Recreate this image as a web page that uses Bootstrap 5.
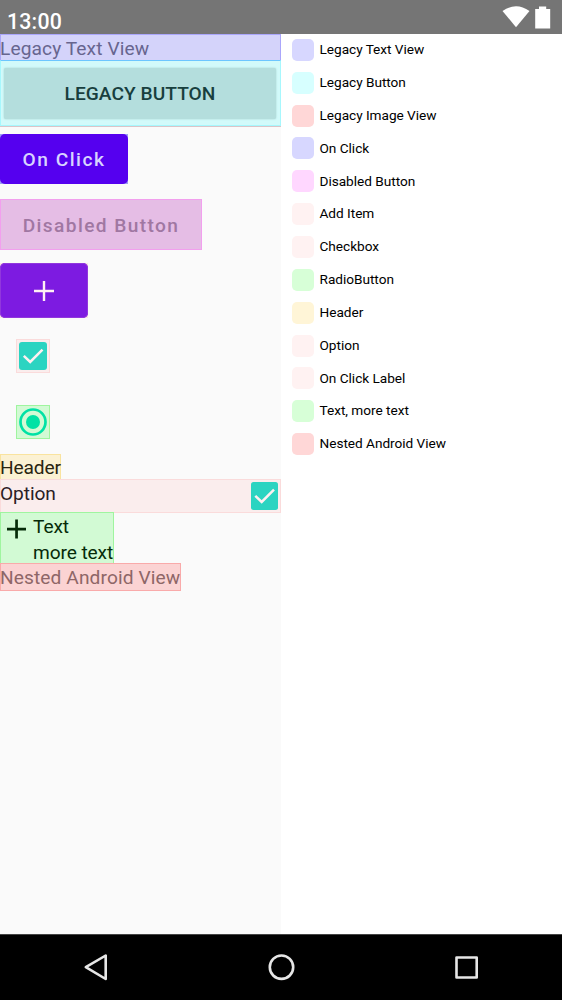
<!DOCTYPE html>
<html lang="en">
<head>
<meta charset="utf-8">
<meta name="viewport" content="width=device-width, initial-scale=1">
<title>Accessibility snapshot</title>
<link href="https://cdn.jsdelivr.net/npm/bootstrap@5.3.0/dist/css/bootstrap.min.css" rel="stylesheet">
<style>
body{font-family:Roboto,"Liberation Sans",sans-serif;background:#fff;color:#000}
.screen{height:1000px;width:562px;overflow:hidden}
.status{height:34px;background:#757575;color:#fff;font-size:21.3px;font-weight:500;line-height:24px;letter-spacing:.2px;padding:10px 10px 0 7px}
.status svg{margin-top:-10px}
.views{width:281px;background:#fafafa;font-size:19.15px;line-height:25.5px}
.zone{border:1px solid;white-space:nowrap}
.zone>span,.zone.flush{text-indent:-1px}
.z-blue{background:#d4d3fa;border-color:#aaa6fb;color:#67658f;height:27px;line-height:27px;letter-spacing:.1px}
.z-cyan{background:#d2fafa;border-color:#a7f7fd;border-top-color:#6cc6ff;height:66px;margin-top:-1px;padding:7px 4px 6px 3px}
.legacy-btn{height:51px;background:#b4dedd;border-radius:2px;box-shadow:0 0 2px #9fcccb;color:#183f3e;font-size:19.15px;font-weight:500;letter-spacing:.05px}
.image-line{height:1px;background:#d9c5c8}
.fill-btn{font-size:19.15px;font-weight:500;letter-spacing:1.5px;border-radius:5px;padding-top:2px}
.b-click{width:128px;height:50px;margin-top:7px;background:#9c9bf5}
.b-click .fill-btn{background:#5500ef;color:#d8d4ff}
.b-off{width:202px;height:51px;margin-top:15px;background:#e5bde5;border-color:#f29fee;color:#a077a2;letter-spacing:1.4px}
.b-add{width:88px;height:55px;margin-top:13px;background:#fae3e3}
.b-add .fill-btn{background:#7d1be1;box-shadow:inset 0 0 0 1px #9137dd;padding-top:0}
.box-tick{width:34px;height:34px;margin:21px 0 0 16px;background:#faeded;border-color:#fadbdb}
.box-radio{width:34px;height:34px;margin:32px 0 0 16px;background:#d2fad4;border-color:#9ff59f}
.z-head{width:61px;height:26px;margin-top:15px;background:#fbf1d3;border-color:#f9e39f;color:#292411;letter-spacing:-.15px}
.z-opt{height:34px;margin-top:-1px;background:#faeded;border-color:#fadbdb;color:#2a2025;letter-spacing:-.1px}
.z-opt span{padding-top:1px}
.z-green{width:114px;height:52px;margin-top:-1px;background:#d2fad4;border-color:#9ff59f;color:#052b08;letter-spacing:-.1px}
.z-green span{padding-top:1px;text-indent:0}
.z-red{width:181px;height:28px;margin-top:-1px;line-height:28px;background:#fbd3d3;border-color:#f9aaaa;color:#8e6667;letter-spacing:.1px}
.legend{padding:0 0 0 11px}
.entry{height:32.85px;font-size:13.65px;gap:5.5px;letter-spacing:-.03px}
.entry span{margin-top:-2px}
.swatch{width:22px;height:22px;border-radius:5px;margin-top:-1px}
.navkeys{height:66px;background:#000;border-top:1px solid #444}
svg{display:block;flex:none}
</style>
</head>
<body>
<div class="screen d-flex flex-column">
  <header class="status d-flex justify-content-between">
    <span>13:00</span>
    <svg width="52" height="32" viewBox="500 0 52 32" fill="#fff"><path d="M502.5 11Q516 1.5 529.5 11L516 27.2Z"/><path d="M535.2 8.9H539V6.5H546.2V8.9H550.2V28.5H535.2Z"/></svg>
  </header>
  <main class="d-flex flex-grow-1">
    <section class="views">
      <div class="zone flush z-blue">Legacy Text View</div>
      <div class="zone z-cyan"><div class="legacy-btn d-flex align-items-center justify-content-center">LEGACY BUTTON</div></div>
      <div class="image-line"></div>
      <div class="b-click"><div class="fill-btn h-100 d-flex align-items-center justify-content-center">On Click</div></div>
      <div class="zone fill-btn rounded-0 b-off d-flex align-items-center justify-content-center">Disabled Button</div>
      <div class="b-add"><div class="fill-btn h-100 d-flex align-items-center justify-content-center">
        <svg width="20" height="20" viewBox="0 0 20 20" fill="#fff0f3"><path d="M8.8 0h2.4v8.8H20v2.4h-8.8V20H8.8v-8.8H0V8.8h8.8z"/></svg></div></div>
      <div class="zone box-tick d-flex align-items-center justify-content-center">
        <svg width="28" height="28" viewBox="0 0 28 28"><rect width="28" height="28" rx="3" fill="#2bd4c1"/><path d="M4.8 13.8l6.4 6.2L23.5 7.7" fill="none" stroke="#fff0f1" stroke-width="2.5"/></svg>
      </div>
      <div class="zone box-radio d-flex align-items-center justify-content-center">
        <svg width="28" height="28" viewBox="0 0 28 28"><circle cx="14" cy="14" r="12.5" fill="none" stroke="#00e2a5" stroke-width="2.7"/><circle cx="14" cy="14" r="7" fill="#00e2a5"/></svg>
      </div>
      <div class="zone flush z-head">Header</div>
      <div class="zone z-opt d-flex justify-content-between"><span>Option</span>
        <svg width="29" height="30" viewBox="0 0 29 30"><rect x="0" y="2" width="27" height="28" rx="2.5" fill="#2bd4c1"/><path d="M4.3 15.8l6.4 6.2L23 9.7" fill="none" stroke="#fff0f1" stroke-width="2.5"/></svg>
      </div>
      <div class="zone z-green d-flex"><svg width="32" height="30" viewBox="0 0 32 30" fill="#052b08"><path d="M14.2 6.5h2.7v8.2H25v2.7h-8.1v8.2h-2.7v-8.2H6v-2.7h8.2z"/></svg>
        <span>Text<br>more text</span></div>
      <div class="zone flush z-red">Nested Android View</div>
    </section>
    <section class="legend flex-grow-1">
      <div class="entry d-flex align-items-center"><i class="swatch" style="background:#d7d7ff"></i><span>Legacy Text View</span></div>
      <div class="entry d-flex align-items-center"><i class="swatch" style="background:#d7ffff"></i><span>Legacy Button</span></div>
      <div class="entry d-flex align-items-center"><i class="swatch" style="background:#ffd7d7"></i><span>Legacy Image View</span></div>
      <div class="entry d-flex align-items-center"><i class="swatch" style="background:#d7d7ff"></i><span>On Click</span></div>
      <div class="entry d-flex align-items-center"><i class="swatch" style="background:#ffd7ff"></i><span>Disabled Button</span></div>
      <div class="entry d-flex align-items-center"><i class="swatch" style="background:#fff2f2"></i><span>Add Item</span></div>
      <div class="entry d-flex align-items-center"><i class="swatch" style="background:#fff2f2"></i><span>Checkbox</span></div>
      <div class="entry d-flex align-items-center"><i class="swatch" style="background:#d7ffd7"></i><span>RadioButton</span></div>
      <div class="entry d-flex align-items-center"><i class="swatch" style="background:#fff5d7"></i><span>Header</span></div>
      <div class="entry d-flex align-items-center"><i class="swatch" style="background:#fff2f2"></i><span>Option</span></div>
      <div class="entry d-flex align-items-center"><i class="swatch" style="background:#fff2f2"></i><span>On Click Label</span></div>
      <div class="entry d-flex align-items-center"><i class="swatch" style="background:#d7ffd7"></i><span>Text, more text</span></div>
      <div class="entry d-flex align-items-center"><i class="swatch" style="background:#ffd7d7"></i><span>Nested Android View</span></div>
    </section>
  </main>
  <footer class="navkeys">
    <svg width="562" height="65" viewBox="0 935 562 65" fill="none" stroke="#e6e6e6" stroke-width="2.6" stroke-linejoin="round"><path d="M105.7 955.5V979L85.8 967.2Z"/><circle cx="281.5" cy="967.2" r="11.7"/><path d="M456.5 957.5H476.7V977.5H456.5Z"/></svg>
  </footer>
</div>
<script src="https://cdn.jsdelivr.net/npm/bootstrap@5.3.0/dist/js/bootstrap.bundle.min.js"></script>
</body>
</html>
